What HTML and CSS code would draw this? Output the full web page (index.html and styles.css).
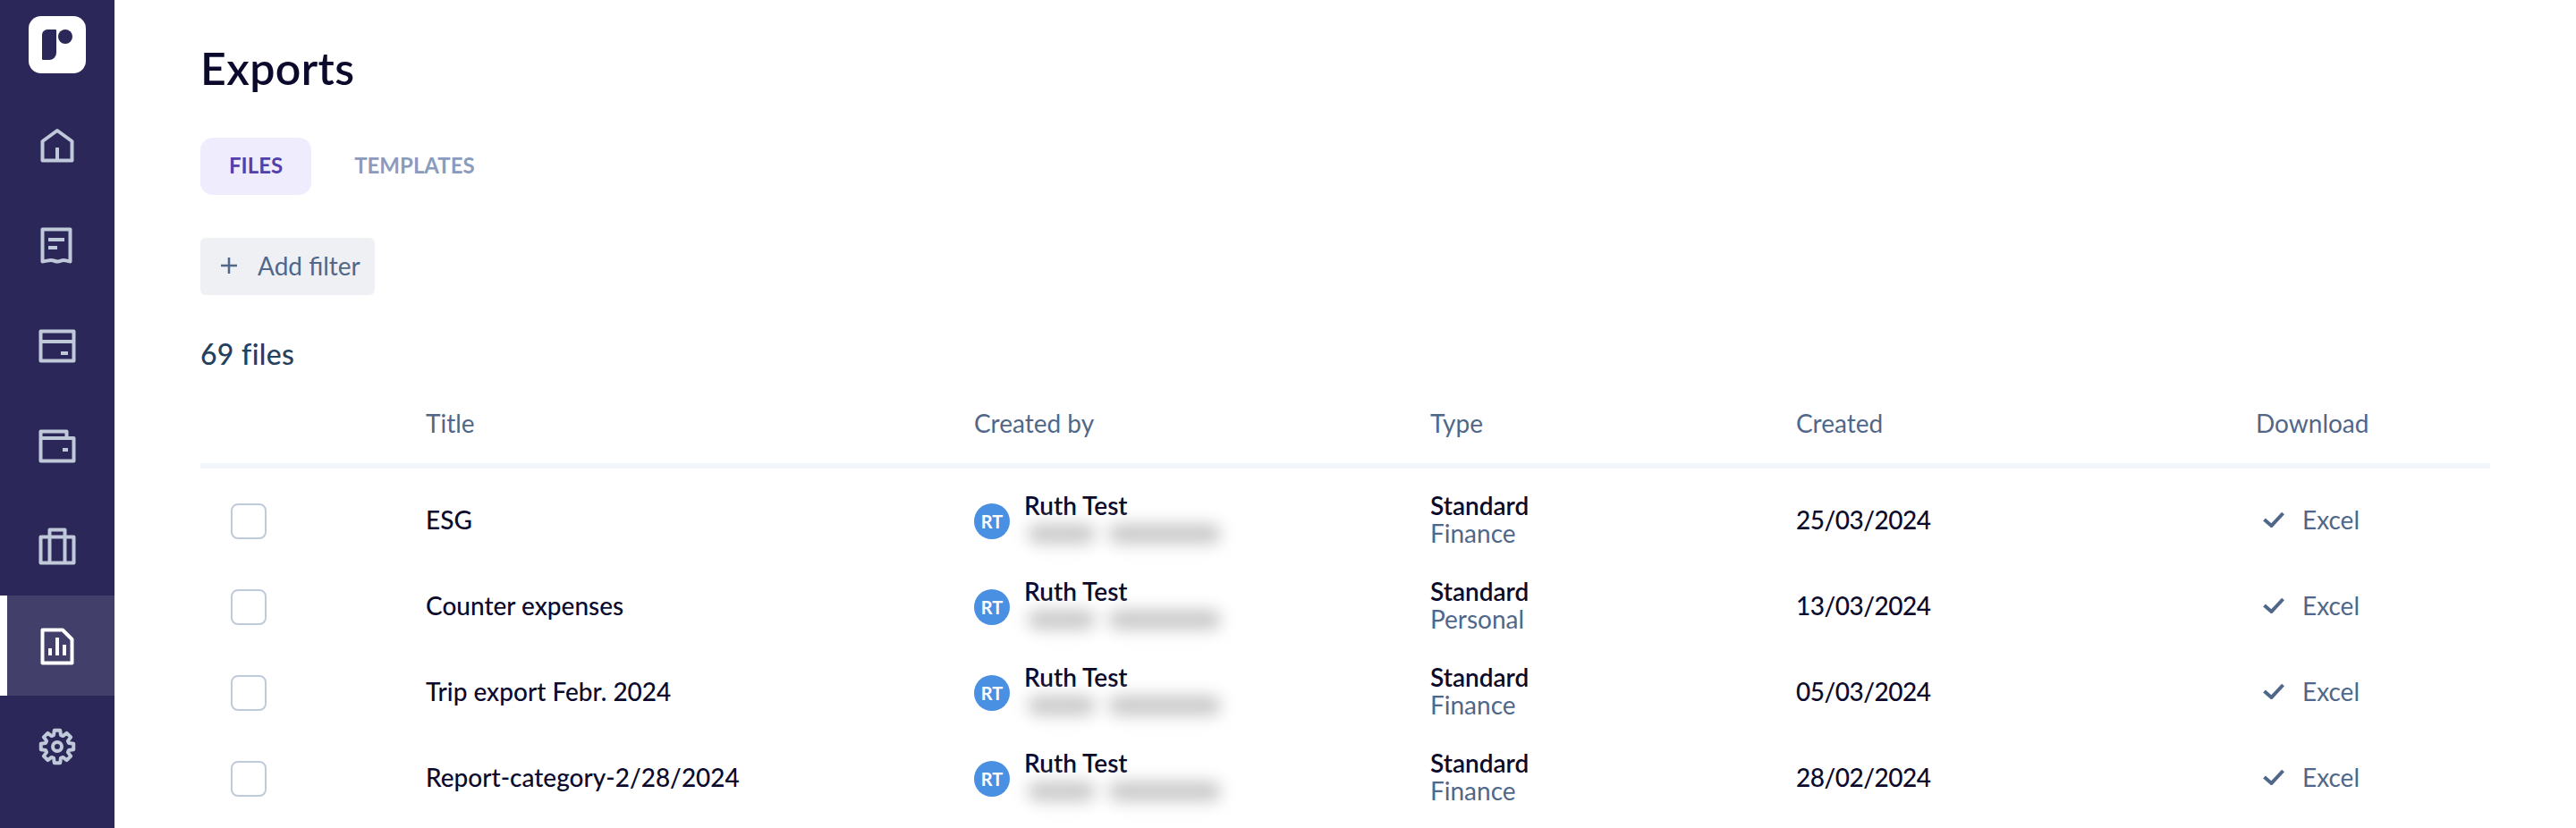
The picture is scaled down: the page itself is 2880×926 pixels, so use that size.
FILE: index.html
```html
<!DOCTYPE html>
<html lang="en">
<head>
<meta charset="utf-8">
<title>Exports</title>
<link rel="stylesheet" href="styles.css">
</head>
<body>
<div class="app">
  <aside class="sidebar">
    <div class="logo">
      <svg width="64" height="64" viewBox="0 0 64 64"><path class="logo-mark" d="M21 15h9a1 1 0 0 1 1 1v25a8 8 0 0 1-8 8h-7a1 1 0 0 1-1-1V21a6 6 0 0 1 6-6z"/><circle class="logo-mark" cx="41" cy="23" r="8"/></svg>
    </div>
    <nav class="nav">
      <a class="nav-item"><svg class="icon" viewBox="0 0 48 48"><path d="M24 8 7.500 20v21.500h33V20zM24 27v14.500"/></svg></a>
      <a class="nav-item"><svg class="icon" viewBox="0 0 48 48"><path d="M7.500 42.500V6.500h31v36c-3.500-.5-5-1.500-7.500-1.500s-3.500 1.500-6.500 1.500S20 41 17 41s-5 1-9.500 1.500zM14 18h18M14 27h10"/></svg></a>
      <a class="nav-item"><svg class="icon" viewBox="0 0 48 48"><path d="M5.500 8.500h37v33h-37zM5.500 20h37M28 33h8"/></svg></a>
      <a class="nav-item"><svg class="icon" viewBox="0 0 48 48"><path d="M5.500 16h37v25.500h-37zM5.500 16V8.500h29V16M30 29h6"/></svg></a>
      <a class="nav-item"><svg class="icon" viewBox="0 0 48 48"><path d="M5.500 14.500h37v29h-37zM15.500 43.500v-37h17v37"/></svg></a>
      <a class="nav-item nav-item-active"><svg class="icon" viewBox="0 0 48 48"><path d="M7.500 6.500H30L40.500 17v26.500h-33zM16 35v-8M24 35V15M32 35V23"/></svg></a>
      <a class="nav-item"><svg class="icon" viewBox="0 0 48 48"><g transform="translate(24 25)"><path d="M12.910-3.950 18.220-3.210 18.220 3.210 12.910 3.950 11.920 6.340 15.150 10.610 10.610 15.150 6.340 11.920 3.950 12.910 3.210 18.220-3.210 18.220-3.950 12.910-6.340 11.920-10.610 15.150-15.150 10.610-11.920 6.340-12.910 3.950-18.220 3.210-18.220-3.210-12.910-3.950-11.920-6.340-15.150-10.610-10.610-15.150-6.340-11.920-3.950-12.910-3.210-18.220 3.210-18.220 3.950-12.910 6.340-11.920 10.610-15.150 15.150-10.610 11.920-6.340z"/><circle r="5"/></g></svg></a>
    </nav>
  </aside>
  <main class="main">
    <h1 class="title">Exports</h1>
    <div class="tabs">
      <a class="tab tab-active">FILES</a>
      <a class="tab tab-idle">TEMPLATES</a>
    </div>
    <button class="filter-btn" type="button">
      <svg class="plus" width="20" height="20" viewBox="0 0 20 20"><path d="M10 1v18M1 10h18"/></svg>
      <span>Add filter</span>
    </button>
    <div class="count">69 files</div>
    <div class="table">
      <div class="row row-head">
        <div></div><div>Title</div><div>Created by</div><div>Type</div><div>Created</div><div>Download</div>
      </div>
      <div class="rows">
        <div class="row row-body">
          <div><span class="checkbox"></span></div>
          <div class="strong cell-text">ESG</div>
          <div class="person"><span class="avatar">RT</span><div class="stack"><span class="bold">Ruth Test</span><span class="redacted" aria-hidden="true"><i></i><i></i></span></div></div>
          <div class="stack"><span class="bold">Standard</span><span class="sub">Finance</span></div>
          <div class="strong cell-text date">25/03/2024</div>
          <div class="dl"><svg class="check" width="28" height="18" viewBox="0 0 28 18"><path d="M3.500 9l8 7L24.500 2"/></svg><span>Excel</span></div>
        </div>
        <div class="row row-body">
          <div><span class="checkbox"></span></div>
          <div class="strong cell-text">Counter expenses</div>
          <div class="person"><span class="avatar">RT</span><div class="stack"><span class="bold">Ruth Test</span><span class="redacted" aria-hidden="true"><i></i><i></i></span></div></div>
          <div class="stack"><span class="bold">Standard</span><span class="sub">Personal</span></div>
          <div class="strong cell-text date">13/03/2024</div>
          <div class="dl"><svg class="check" width="28" height="18" viewBox="0 0 28 18"><path d="M3.500 9l8 7L24.500 2"/></svg><span>Excel</span></div>
        </div>
        <div class="row row-body">
          <div><span class="checkbox"></span></div>
          <div class="strong cell-text">Trip export Febr. 2024</div>
          <div class="person"><span class="avatar">RT</span><div class="stack"><span class="bold">Ruth Test</span><span class="redacted" aria-hidden="true"><i></i><i></i></span></div></div>
          <div class="stack"><span class="bold">Standard</span><span class="sub">Finance</span></div>
          <div class="strong cell-text date">05/03/2024</div>
          <div class="dl"><svg class="check" width="28" height="18" viewBox="0 0 28 18"><path d="M3.500 9l8 7L24.500 2"/></svg><span>Excel</span></div>
        </div>
        <div class="row row-body">
          <div><span class="checkbox"></span></div>
          <div class="strong cell-text">Report-category-2/28/2024</div>
          <div class="person"><span class="avatar">RT</span><div class="stack"><span class="bold">Ruth Test</span><span class="redacted" aria-hidden="true"><i></i><i></i></span></div></div>
          <div class="stack"><span class="bold">Standard</span><span class="sub">Finance</span></div>
          <div class="strong cell-text date">28/02/2024</div>
          <div class="dl"><svg class="check" width="28" height="18" viewBox="0 0 28 18"><path d="M3.500 9l8 7L24.500 2"/></svg><span>Excel</span></div>
        </div>
      </div>
    </div>
  </main>
</div>
</body>
</html>
```
FILE: styles.css
```css
* { box-sizing: border-box; }
html, body { margin: 0; height: 100%; overflow: hidden; background: #fff; }
body { font-family: "Lato", "Liberation Sans", sans-serif; color: #0b0a2c; }
.app { display: flex; height: 926px; }
.sidebar { width: 128px; flex: none; background: #2c2759; padding-top: 18px; display: flex; flex-direction: column; align-items: stretch; }
.logo { width: 64px; height: 64px; margin: 0 0 24px 32px; background: #fff; border-radius: 14px; }
.logo svg { display: block; }
.logo-mark { fill: #2c2759; }
.nav { display: flex; flex-direction: column; }
.nav-item { height: 112px; display: flex; align-items: center; justify-content: center; color: #bfc9d9; }
.nav-item-active { background: #433f6b; border-left: 8px solid #fff; color: #fff; padding-right: 8px; }
.icon { width: 48px; height: 48px; fill: none; stroke: currentColor; stroke-width: 4; stroke-linejoin: round; }
.main { flex: 1; padding: 48px 96px 0 96px; min-width: 0; }
.title { margin: 0 0 50px; font-size: 50px; line-height: 56px; font-weight: 600; letter-spacing: .4px; color: #0b0a2c; }
.tabs { display: flex; height: 64px; }
.tab { display: flex; align-items: center; height: 64px; padding: 0 32px 4px; border-radius: 14px; font-size: 24px; font-weight: 700; }
.tab-active { background: #efecfd; color: #5340ac; }
.tab-idle { margin-left: 16px; color: #8a9bbd; }
.filter-btn { display: flex; align-items: center; gap: 22px; margin-top: 48px; width: 195px; height: 64px; padding: 0 0 2px 22px; border: 0; border-radius: 6px; background: #eef0f3; font: inherit; font-size: 28px; color: #50678a; }
.plus { stroke: #50678a; stroke-width: 2.500; fill: none; flex: none; }
.count { margin-top: 46px; font-size: 32px; line-height: 40px; font-weight: 500; letter-spacing: .3px; color: #24405f; }
.row { display: grid; grid-template-columns: 252px 613px 510px 409px 514px 262px; align-items: center; }
.row-head { height: 108px; padding-top: 12px; border-bottom: 6px solid #f2f5fa; font-size: 28px; color: #50678a; }
.rows { margin-top: 11px; }
.row-body { height: 96px; font-size: 28px; }
.row-body > div:first-child { padding-left: 34px; display: flex; }
.checkbox { display: block; width: 40px; height: 40px; border: 2px solid #bfcbdc; border-radius: 8px; background: #fff; }
.strong { color: #0b0a2c; font-weight: 500; }
.bold { color: #0b0a2c; font-weight: 600; }
.cell-text { padding-bottom: 4px; }
.date { letter-spacing: -.5px; }
.stack { display: flex; flex-direction: column; line-height: 31px; padding-bottom: 4px; }
.sub { color: #50678a; }
.person { display: flex; align-items: center; gap: 16px; }
.avatar { display: flex; align-items: center; justify-content: center; width: 40px; height: 40px; border-radius: 50%; background: #4a90e2; color: #fff; font-size: 20px; font-weight: 700; flex: none; }
.redacted { display: flex; gap: 14px; width: 229px; height: 31px; padding: 5px 4px; filter: blur(9px); }
.redacted i { display: block; height: 22px; background: #c8c8c8; border-radius: 11px; }
.redacted i:first-child { width: 76px; }
.redacted i:last-child { width: 126px; }
.dl { display: flex; align-items: center; gap: 18px; color: #50678a; padding: 0 0 4px 6px; }
.check { fill: none; stroke: #50678a; stroke-width: 4; flex: none; }
```
